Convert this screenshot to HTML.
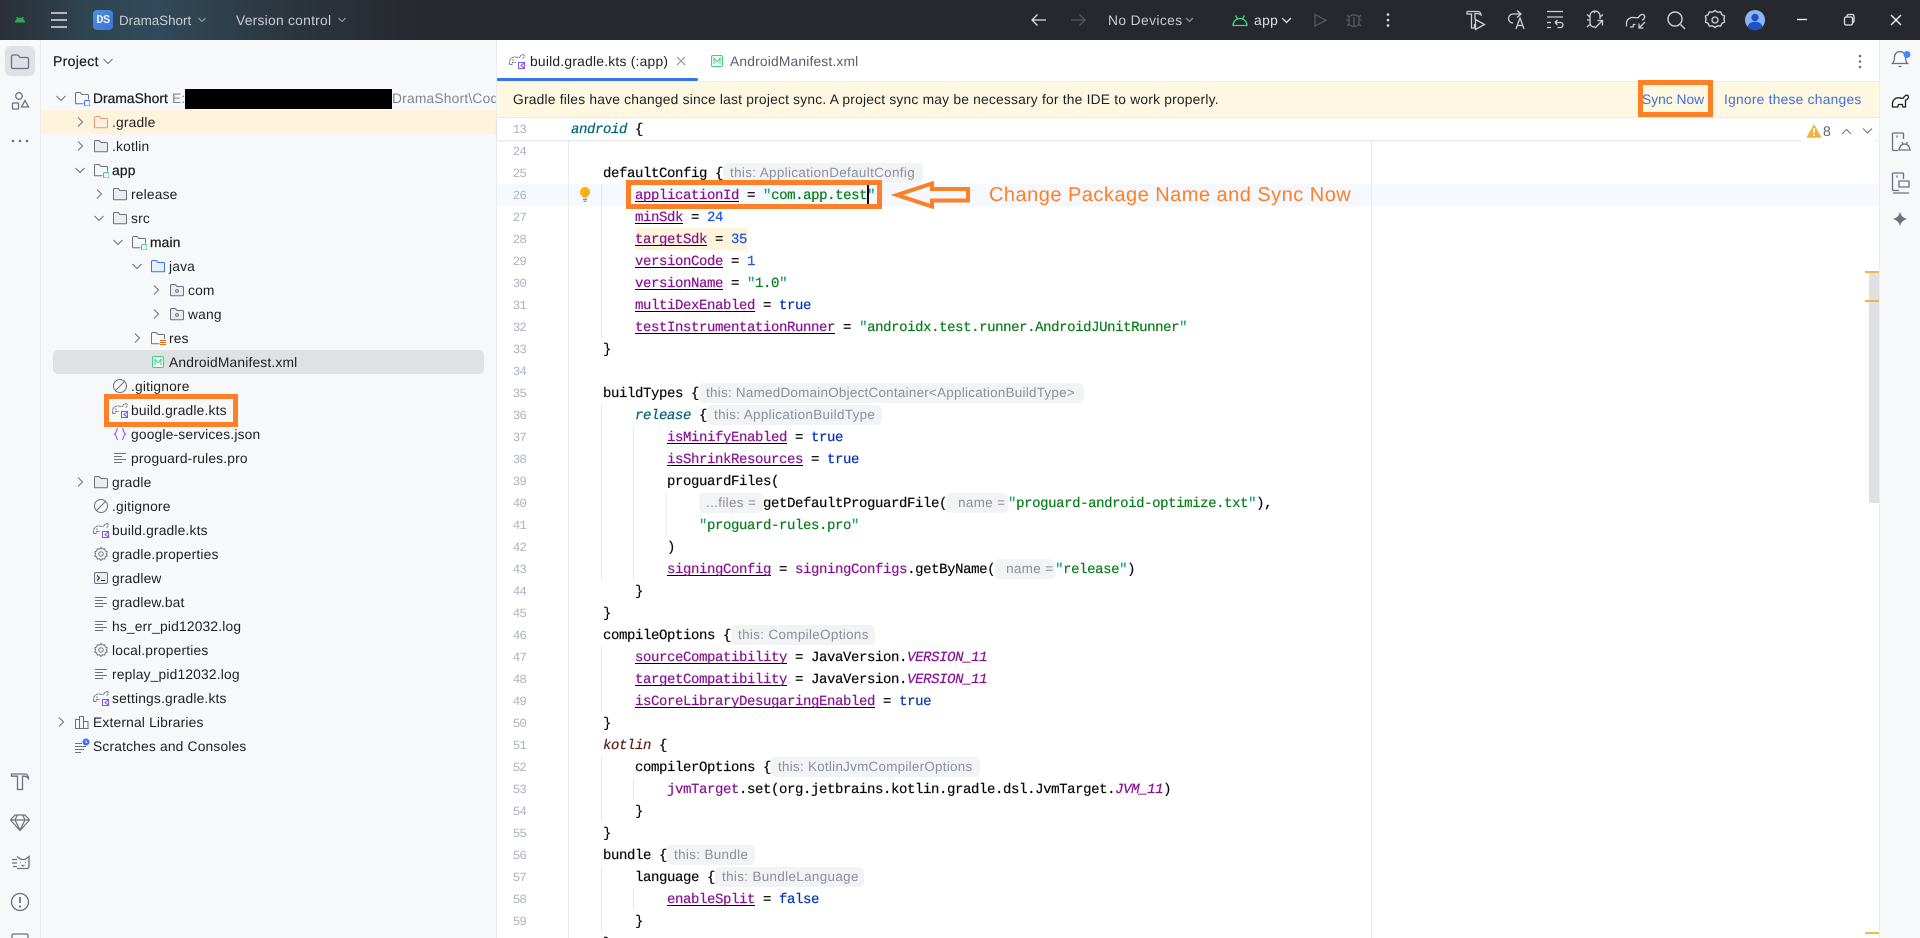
<!DOCTYPE html>
<html lang="en"><head><meta charset="utf-8"><title>DramaShort</title>
<style>
*{box-sizing:border-box}
html,body{margin:0;padding:0;width:1920px;height:938px;overflow:hidden;background:#fff}
body{position:relative;font-family:"Liberation Sans",sans-serif;font-size:13.8px;color:#1e1f22;text-rendering:geometricPrecision}
.a{position:absolute}
#top{left:0;top:0;width:1920px;height:40px;background:linear-gradient(90deg,#2a2f36 0,#2e4552 90px,#31495a 160px,#2b343b 300px,#26282e 430px,#26282e 100%);color:#c9ccd4;letter-spacing:.32px}
#left{left:0;top:40px;width:41px;height:898px;background:#f7f8fa;border-right:1px solid #ebecf0}
#panel{left:41px;top:40px;width:456px;height:898px;background:#f7f8fa;border-right:1px solid #ebecf0;overflow:hidden}
#right{left:1879px;top:40px;width:41px;height:898px;background:#f7f8fa;border-left:1px solid #ebecf0}
.tree{position:absolute;left:0;top:46px;width:455px}
.r{position:relative;height:24px;line-height:26px;white-space:pre;padding-left:calc(52px + 19px*var(--k));letter-spacing:.18px}
.r svg{position:absolute;width:16px;height:16px;top:4px}
.r .ch{left:calc(12px + 19px*var(--k));fill:none;stroke:#6c707e;stroke-width:1}
.r .ic{left:calc(33px + 19px*var(--k))}
.k0{--k:0}.k1{--k:1}.k2{--k:2}.k3{--k:3}.k4{--k:4}.k5{--k:5}
.fg{fill:#ebecf0;stroke:#6c707e}.fo{fill:#ffeee2;stroke:#e89a68}.fb{fill:#e7effd;stroke:#3574f0}
#tabs{left:497px;top:40px;width:1382px;height:42px;background:#fff;border-bottom:1px solid #ebecf0}
#banner{left:497px;top:82px;width:1382px;height:36px;background:#fef7e1;border-bottom:1px solid #ebecf0;line-height:35px;white-space:pre;letter-spacing:.21px}
.lnk{position:absolute;top:0;color:#3f6fd8}
.code{position:absolute;left:571px;top:140px;font-family:"Liberation Mono",monospace;font-size:14px;letter-spacing:-.4px;color:#080808;-webkit-text-stroke:.2px}
.l{height:22px;line-height:24px;white-space:pre;overflow:hidden}
.l1{padding-left:32px}.l2{padding-left:64px}.l3{padding-left:96px}.l4{padding-left:128px}
.p{color:#871094}.u{text-decoration:underline #000 1px;text-underline-offset:1.500px;text-decoration-skip-ink:none}
.s{color:#067d17}.q{color:#0f9f8c}.n{color:#1750eb}.k{color:#0033b3}.i{font-style:italic}.ft{color:#00627a}
.h{display:inline-block;vertical-align:top;height:20px;line-height:20px;margin-top:1px;padding-left:7px;background:#f2f3f5;border-radius:5px;color:#8c8f98;font-family:"Liberation Sans",sans-serif;font-size:13.4px;letter-spacing:.36px;overflow:hidden;-webkit-text-stroke:0}
.nums{position:absolute;left:497px;top:140px;width:29px;text-align:right;font-family:"Liberation Mono",monospace;font-size:12.5px;letter-spacing:-.9px;color:#aeb3c2}
.nums div{height:22px;line-height:24px}
.box{position:absolute;border:5px solid #ff7f27}
</style></head><body>
<svg width="0" height="0" style="position:absolute"><defs>
<symbol id="cr" viewBox="0 0 16 16"><path d="M6 3.500l4.500 4.500L6 12.500"/></symbol>
<symbol id="cd" viewBox="0 0 16 16"><path d="M3.500 6l4.500 4.500L12.500 6"/></symbol>
<symbol id="f" viewBox="0 0 16 16"><path d="M1.500 3.500a1 1 0 0 1 1-1h3.700l1.800 2h5.500a1 1 0 0 1 1 1v7.500a.8.8 0 0 1-.8.800H2.300a.8.800 0 0 1-.8-.8z"/></symbol>
<symbol id="pk" viewBox="0 0 16 16"><path d="M1.500 3.500a1 1 0 0 1 1-1h3.700l1.800 2h5.500a1 1 0 0 1 1 1v7.500a.8.8 0 0 1-.8.800H2.300a.8.800 0 0 1-.8-.8z" fill="#ebecf0" stroke="#6c707e"/><circle cx="8" cy="9" r="1.400" fill="none" stroke="#6c707e"/></symbol>
<symbol id="mod" viewBox="0 0 16 16"><path d="M1.500 3.500a1 1 0 0 1 1-1h3.700l1.800 2h5.500a1 1 0 0 1 1 1v7.500a.8.8 0 0 1-.8.800H2.300a.8.800 0 0 1-.8-.8z" fill="#f7f8fa" stroke="#6c707e"/><rect x="9.500" y="9.500" width="7" height="7" fill="#f7f8fa"/><rect x="10.500" y="10.500" width="5.500" height="5.500" rx="1.200" fill="#f7f8fa" stroke="currentColor"/></symbol>
<symbol id="res" viewBox="0 0 16 16"><path d="M1.500 3.500a1 1 0 0 1 1-1h3.700l1.800 2h5.500a1 1 0 0 1 1 1v7.500a.8.8 0 0 1-.8.800H2.300a.8.800 0 0 1-.8-.8z" fill="#f7f8fa" stroke="#6c707e"/><rect x="9.500" y="9" width="7" height="7" fill="#f7f8fa"/><path d="M10 10.500h6M10 12.500h6M10 14.500h6" stroke="#e66d17"/></symbol>
<symbol id="mf" viewBox="0 0 16 16"><rect x="2.500" y="2.500" width="11" height="11" rx="1.500" fill="#f2fcf3" stroke="#3bd07f"/><path d="M5 11V5.200l3 3.800 3-3.800V11" fill="none" stroke="#3bd07f"/></symbol>
<symbol id="ign" viewBox="0 0 16 16"><circle cx="8" cy="8" r="6.500" fill="none" stroke="#6c707e"/><path d="M3.500 12.500l9-9" stroke="#6c707e"/></symbol>
<symbol id="kts" viewBox="0 0 16 16"><path d="M.5 11.500V9C.5 6 3 3.800 6 4c2 .1 3.300.8 4.800.3M10.800 4.300c.5-2 2.500-3.300 3.800-2.500 1.200.9.600 3.200-1 3.700M.5 11.500H3l.5-2H7M3.500 6.500l1 1.500" fill="none" stroke="#7c808e" stroke-width="1.100" stroke-dasharray="3 .6"/><rect x="9.500" y="9.500" width="6" height="6" fill="#f7f8fa" stroke="#7f52ff"/><path d="M15 10.200l-3 2.300 3 2.300" fill="none" stroke="#7f52ff"/></symbol>
<symbol id="js" viewBox="0 0 16 16"><path d="M6 2.500C4 2.500 5 7 2.500 8 5 9 4 13.500 6 13.500M10 2.500c2 0 1 4.500 3.500 5.500C11 9 12 13.500 10 13.500" fill="none" stroke="#7f52ff"/></symbol>
<symbol id="txt" viewBox="0 0 16 16"><path d="M2 3.500h12M2 6.500h8M2 9.500h12M2 12.500h8" fill="none" stroke="#6c707e"/></symbol>
<symbol id="gear" viewBox="0 0 16 16"><path d="M8 1.500l1.500 1.600 2.200-.3.600 2.100 2 1-.9 2 .9 2.100-2 .9-.6 2.200-2.200-.3L8 14.500l-1.500-1.700-2.200.3-.6-2.200-2-.9.900-2.100-.9-2 2-1 .6-2.100 2.200.3z" fill="none" stroke="#6c707e"/><circle cx="8" cy="8" r="2.200" fill="none" stroke="#6c707e"/></symbol>
<symbol id="term" viewBox="0 0 16 16"><rect x="1.500" y="2.500" width="13" height="11" rx="1.500" fill="#ebecf0" stroke="#6c707e"/><path d="M4 5.500L6.500 8 4 10.500M8 10.500h4" fill="none" stroke="#1e1f22"/></symbol>
<symbol id="lib" viewBox="0 0 16 16"><path d="M1.500 14.500v-9h4v9zM5.500 14.500V2.500h4v12zM9.500 14.500v-7h4.500v7z" fill="none" stroke="#6c707e"/></symbol>
<symbol id="scr" viewBox="0 0 16 16"><path d="M1 5.500h7M1 8.500h11M1 11.500h9M1 14.500h6" fill="none" stroke="#6c707e"/><circle cx="12" cy="4" r="3.500" fill="#3574f0"/><path d="M12 2.300V4.300h1.300" fill="none" stroke="#fff" stroke-width=".8"/></symbol>
<symbol id="ele" viewBox="0 0 20 20"><path d="M2.500 16v-3.500C2.500 9 5.500 6.500 9 6.800c1.800.1 3 .9 4.500.2 .8-2 3-3.500 4.300-2.500 1.200 1 .4 3.600-1.300 4.300l-1 .4v6.800h-2.600l-.6-2.500H8.500l-.7 2.500z" fill="none" stroke="currentColor" stroke-width="1.300"/></symbol>
</defs></svg>

<div id="top" class="a">
 <span class="a" style="left:119px;top:0;line-height:41px;font-size:13.4px;letter-spacing:0">DramaShort</span>
 <span class="a" style="left:236px;top:0;line-height:41px;letter-spacing:.27px">Version control</span>
 <span class="a" style="left:1108px;top:0;line-height:41px;letter-spacing:.4px">No Devices</span>
 <span class="a" style="left:1254px;top:0;line-height:41px;letter-spacing:.4px;color:#dfe1e5">app</span>
 <div class="a" style="left:93px;top:10px;width:20px;height:20px;border-radius:4px;background:linear-gradient(135deg,#4b90d8,#3c72d8);color:#e6eefc;font:bold 12px/20px 'Liberation Mono',monospace;letter-spacing:-.4px;text-align:center">DS</div>
 <svg class="a" style="left:0;top:0" width="1920" height="40" fill="none" stroke="#ced0d6" stroke-width="1.300">
  <path d="M15 22.500c.2-3 2.300-5 5-5s4.800 2 5 5z" fill="#2da55d" stroke="none"/><path d="M16.500 17l1.300 1.500M23.500 17l-1.300 1.500" stroke="#2da55d"/>
  <path d="M51 13h16M51 20h16M51 27h16" stroke="#dfe1e5" stroke-width="1.600"/>
  <path d="M198.500 18l3.500 3.500 3.500-3.500M338.500 18l3.500 3.500 3.500-3.500M1186 18l3.500 3.500 3.500-3.500" stroke="#8a8d96"/>
  <path d="M1046 20h-14M1037.500 14.500L1032 20l5.500 5.500" stroke="#dfe1e5"/>
  <path d="M1071 20h14M1079.500 14.500L1085 20l-5.500 5.500" stroke="#55585f"/>
  <path d="M1233 25.500c.2-4 3-7 7-7s6.800 3 7 7zM1235.500 15.500l2 3.300M1244.500 15.500l-2 3.300" stroke="#3ddc84"/>
  <path d="M1282 18l4.500 4.500L1291 18" stroke="#dfe1e5"/>
  <path d="M1315 14.500v11.500l11-5.800z" stroke="#55585f"/>
  <path d="M1349 17.500c.5-1.500 2.500-2.500 5-2.500s4.500 1 5 2.500v5.500a5 3.500 0 0 1-10 0zM1346 20h3M1359 20h3M1347 15l2.500 2.500M1361 15l-2.500 2.500M1347 26l2.500-2.500M1361 26l-2.500-2.500M1354 17v9" stroke="#55585f"/>
  <circle cx="1388" cy="14.500" r="1.300" fill="#dfe1e5" stroke="none"/><circle cx="1388" cy="20" r="1.300" fill="#dfe1e5" stroke="none"/><circle cx="1388" cy="25.500" r="1.300" fill="#dfe1e5" stroke="none"/>
  <path d="M1467 11.500h11c1.500 0 3 1.200 3 3.500-1.200-1-2.500-1.500-4-1.500h-2v6M1467 11.500v2.500h4.500v14h3v-4M1475.500 19.500l9 5-9 5z"/>
  <path d="M1521 14h-8a4.500 4.500 0 0 0 0 9M1517 10.500l4 3.500-4 3.500M1516 29l4-11 4 11M1517.500 25.500h5"/>
  <path d="M1547 11.500h16M1547 17h16M1547 22.500h4M1547 27.500h4M1555 22.500h5.500a2.500 2.500 0 0 1 0 5h-3M1555 22.500l2.500-2.500M1555 22.500l2.500 2.500"/>
  <path d="M1590 16a5 5 0 0 1 10 0v3M1590 16v7a4 4 0 0 0 5 3.800M1587 14.500l3 2.500M1603 14.500l-3 2.500M1587 20h3M1587 27l3-2.500M1595 13l-1.500-2M1595 28l7-7M1597.500 20.500h5v5"/>
  <path d="M1626.500 26.500v-3c0-4 3.500-6.500 7.500-6 1.500.2 3 .6 4.500 0 1-2.500 4-4 5.500-2.500s.3 4.500-2 5M1630 27h3l.5-2.500h2M1645 22l-6 6M1639 23.500v4.500h4.500"/>
  <circle cx="1675" cy="19" r="7" stroke-width="1.400"/><path d="M1680.500 24.500l4.500 4.500" stroke-width="1.400"/>
  <path d="M1715 10.500l2.600 1.700 3-.3 1.300 2.700 2.600 1.400-.5 3 .5 3-2.600 1.400-1.300 2.700-3-.3-2.600 1.700-2.600-1.700-3 .3-1.300-2.700-2.600-1.400.5-3-.5-3 2.600-1.400 1.300-2.700 3 .3z" stroke-width="1.400"/><circle cx="1715" cy="20" r="3"/>
  <circle cx="1755" cy="20" r="10" fill="#8eb4f8" stroke="none"/><circle cx="1755" cy="17.500" r="3.700" fill="#1d53c4" stroke="none"/><path d="M1747.500 27c1-4 4-5.200 7.500-5.200s6.500 1.200 7.500 5.200a10 10 0 0 1-15 0z" fill="#1d53c4" stroke="none"/>
  <path d="M1797 19.500h10" stroke="#fff"/>
  <rect x="1844.500" y="17" width="8" height="8" rx="1.500" stroke="#dfe1e5"/><path d="M1847 17v-1a1.500 1.500 0 0 1 1.500-1.500h4a1.500 1.500 0 0 1 1.500 1.500v5a1.500 1.500 0 0 1-1.500 1.500" stroke="#dfe1e5"/>
  <path d="M1891 15l10 10M1901 15l-10 10" stroke="#fff"/>
 </svg>
</div>

<div id="left" class="a">
 <div class="a" style="left:5px;top:6px;width:30px;height:30px;border-radius:6px;background:#dfe1e5"></div>
 <svg class="a" style="left:0;top:0" width="40" height="898" fill="none" stroke="#6c707e" stroke-width="1.300">
  <path d="M11.500 16.500a1.500 1.500 0 0 1 1.500-1.500h4.800l2.200 2.500h7a1.500 1.500 0 0 1 1.500 1.500v8a1.500 1.500 0 0 1-1.500 1.500H13a1.500 1.500 0 0 1-1.500-1.500z"/>
  <circle cx="19" cy="56" r="3.300"/><rect x="12.500" y="63" width="6" height="6" rx=".8"/><path d="M25 60.500l3.500 6.500h-7z"/>
  <circle cx="13" cy="101" r="1.300" fill="#6c707e" stroke="none"/><circle cx="20" cy="101" r="1.300" fill="#6c707e" stroke="none"/><circle cx="27" cy="101" r="1.300" fill="#6c707e" stroke="none"/>
  <path d="M11.500 734h13c2.500 0 4 1.800 4 4.500-1-1.500-3-2.300-5-2.300h-1v13.300h-5v-13.300h-6z"/>
  <path d="M15 775h10l4.500 5-9.500 10.500L10.500 780zM10.500 780h19M17 775.500l-2 4.500 5 10 5-10-2-4.500" stroke-width="1.200"/>
  <path d="M17 816.500l4 3h4l4-3v10a2 2 0 0 1-2 2H17M12 819.500h5M12 823h5M13 826.500h4"/>
  <path d="M20 822.500h.8M25 822.500h.8M21.500 825l1.500 1 1.500-1" stroke-width="1.200"/>
  <circle cx="20" cy="862" r="8.500"/><path d="M20 857v6" stroke-width="1.800"/><circle cx="20" cy="866.500" r="1.100" fill="#6c707e" stroke="none"/>
  <path d="M12 898v-2.500a1.500 1.500 0 0 1 1.500-1.500h13a1.500 1.500 0 0 1 1.500 1.500v2.500"/>
 </svg>
</div>

<div id="panel" class="a">
 <div class="a" style="left:12px;top:8px;font-weight:400;letter-spacing:.32px;line-height:26px;font-size:14px;-webkit-text-stroke:.25px #1e1f22">Project</div>
 <svg class="a" style="left:59px;top:13px;fill:none;stroke:#6c707e" width="16" height="16"><use href="#cd"/></svg>
 <div class="a" style="left:0;top:70px;width:455px;height:24px;background:#fef3dc"></div>
 <div class="a" style="left:12px;top:310px;width:431px;height:24px;border-radius:5px;background:#dfe1e5"></div>
 <div class="tree">
  <div class="r k0" style="letter-spacing:.05px;-webkit-text-stroke:.25px #1e1f22"><svg class="ch"><use href="#cd"/></svg><svg class="ic" style="color:#3574f0"><use href="#mod"/></svg>DramaShort</div>
  <div class="r k1"><svg class="ch"><use href="#cr"/></svg><svg class="ic fo"><use href="#f"/></svg>.gradle</div>
  <div class="r k1"><svg class="ch"><use href="#cr"/></svg><svg class="ic fg"><use href="#f"/></svg>.kotlin</div>
  <div class="r k1" style="-webkit-text-stroke:.25px #1e1f22"><svg class="ch"><use href="#cd"/></svg><svg class="ic" style="color:#3bd07f"><use href="#mod"/></svg>app</div>
  <div class="r k2"><svg class="ch"><use href="#cr"/></svg><svg class="ic fg"><use href="#f"/></svg>release</div>
  <div class="r k2"><svg class="ch"><use href="#cd"/></svg><svg class="ic fg"><use href="#f"/></svg>src</div>
  <div class="r k3" style="-webkit-text-stroke:.25px #1e1f22"><svg class="ch"><use href="#cd"/></svg><svg class="ic" style="color:#3bd07f"><use href="#mod"/></svg>main</div>
  <div class="r k4"><svg class="ch"><use href="#cd"/></svg><svg class="ic fb"><use href="#f"/></svg>java</div>
  <div class="r k5"><svg class="ch"><use href="#cr"/></svg><svg class="ic"><use href="#pk"/></svg>com</div>
  <div class="r k5"><svg class="ch"><use href="#cr"/></svg><svg class="ic"><use href="#pk"/></svg>wang</div>
  <div class="r k4"><svg class="ch"><use href="#cr"/></svg><svg class="ic"><use href="#res"/></svg>res</div>
  <div class="r k4"><svg class="ic"><use href="#mf"/></svg>AndroidManifest.xml</div>
  <div class="r k2"><svg class="ic"><use href="#ign"/></svg>.gitignore</div>
  <div class="r k2"><svg class="ic"><use href="#kts"/></svg>build.gradle.kts</div>
  <div class="r k2"><svg class="ic"><use href="#js"/></svg>google-services.json</div>
  <div class="r k2"><svg class="ic"><use href="#txt"/></svg>proguard-rules.pro</div>
  <div class="r k1"><svg class="ch"><use href="#cr"/></svg><svg class="ic fg"><use href="#f"/></svg>gradle</div>
  <div class="r k1"><svg class="ic"><use href="#ign"/></svg>.gitignore</div>
  <div class="r k1"><svg class="ic"><use href="#kts"/></svg>build.gradle.kts</div>
  <div class="r k1"><svg class="ic"><use href="#gear"/></svg>gradle.properties</div>
  <div class="r k1"><svg class="ic"><use href="#term"/></svg>gradlew</div>
  <div class="r k1"><svg class="ic"><use href="#txt"/></svg>gradlew.bat</div>
  <div class="r k1"><svg class="ic"><use href="#txt"/></svg>hs_err_pid12032.log</div>
  <div class="r k1"><svg class="ic"><use href="#gear"/></svg>local.properties</div>
  <div class="r k1"><svg class="ic"><use href="#txt"/></svg>replay_pid12032.log</div>
  <div class="r k1"><svg class="ic"><use href="#kts"/></svg>settings.gradle.kts</div>
  <div class="r k0"><svg class="ch"><use href="#cr"/></svg><svg class="ic"><use href="#lib"/></svg>External Libraries</div>
  <div class="r k0"><svg class="ic"><use href="#scr"/></svg>Scratches and Consoles</div>
 </div>
 <span class="a" style="left:131px;top:46px;line-height:26px;color:#818594;letter-spacing:.2px">E:</span>
 <span class="a" style="left:351px;top:46px;line-height:26px;color:#818594;letter-spacing:.2px;white-space:pre">DramaShort\Code</span>
 <div class="a" style="left:144px;top:49px;width:207px;height:20px;background:#000"></div>
</div>

<div id="tabs" class="a">
 <svg class="a" style="left:12px;top:13px" width="16" height="16"><use href="#kts"/></svg>
 <span class="a" style="left:33px;top:0;line-height:43px;letter-spacing:.24px">build.gradle.kts (:app)</span>
 <svg class="a" style="left:178px;top:15px;stroke:#8c8f98;fill:none" width="12" height="12"><path d="M2 2l8 8M10 2l-8 8"/></svg>
 <div class="a" style="left:0;top:38px;width:201px;height:3px;background:#3574f0;border-radius:0 2px 2px 0"></div>
 <svg class="a" style="left:212px;top:13px" width="16" height="16"><use href="#mf"/></svg>
 <span class="a" style="left:233px;top:0;line-height:43px;letter-spacing:.18px;color:#5a5d6b">AndroidManifest.xml</span>
 <svg class="a" style="left:1357px;top:13px;fill:#6c707e" width="12" height="16"><circle cx="6" cy="3" r="1.300"/><circle cx="6" cy="8.500" r="1.300"/><circle cx="6" cy="14" r="1.300"/></svg>
</div>

<div id="banner" class="a"><span class="a" style="left:16px;top:0">Gradle files have changed since last project sync. A project sync may be necessary for the IDE to work properly.</span><span class="lnk" style="left:1145px;letter-spacing:0">Sync Now</span><span class="lnk" style="left:1227px;letter-spacing:.24px">Ignore these changes</span></div>

<div class="a" style="left:497px;top:184px;width:1382px;height:22px;background:#f5f8fe"></div>
<div class="a" style="left:635px;top:228px;width:112px;height:22px;background:#fdf4d9"></div>
<div class="a" style="left:568px;top:140px;width:1px;height:798px;background:#ebecf0"></div>
<div class="a" style="left:1371px;top:118px;width:1px;height:820px;background:#ebecf0"></div>
<svg class="a" style="left:0;top:0" width="1920" height="938" stroke="#e6e7eb" fill="none">
 <path d="M601.500 184V338M601.500 404V580M633.500 426V580M666 492V536M601.500 646V712M601.500 756V822M633.500 778V800M601.500 866V932M633.500 888V910"/>
</svg>

<div class="nums"><div>24</div><div>25</div><div>26</div><div>27</div><div>28</div><div>29</div><div>30</div><div>31</div><div>32</div><div>33</div><div>34</div><div>35</div><div>36</div><div>37</div><div>38</div><div>39</div><div>40</div><div>41</div><div>42</div><div>43</div><div>44</div><div>45</div><div>46</div><div>47</div><div>48</div><div>49</div><div>50</div><div>51</div><div>52</div><div>53</div><div>54</div><div>55</div><div>56</div><div>57</div><div>58</div><div>59</div></div>

<div class="code" style="height:798px;overflow:hidden">
<div class="l"> </div>
<div class="l l1">defaultConfig {<span class="h" style="width:200px">this: ApplicationDefaultConfig</span></div>
<div class="l l2"><span class="p u">applicationId</span> = <span class="s"><span class="q">"</span>com.app.test<span class="q">"</span></span></div>
<div class="l l2"><span class="p u">minSdk</span> = <span class="n">24</span></div>
<div class="l l2"><span class="p u">targetSdk</span> = <span class="n">35</span></div>
<div class="l l2"><span class="p u">versionCode</span> = <span class="n">1</span></div>
<div class="l l2"><span class="p u">versionName</span> = <span class="s"><span class="q">"</span>1.0<span class="q">"</span></span></div>
<div class="l l2"><span class="p u">multiDexEnabled</span> = <span class="k">true</span></div>
<div class="l l2"><span class="p u">testInstrumentationRunner</span> = <span class="s"><span class="q">"</span>androidx.test.runner.AndroidJUnitRunner<span class="q">"</span></span></div>
<div class="l l1">}</div>
<div class="l"> </div>
<div class="l l1">buildTypes {<span class="h" style="width:385px;letter-spacing:.27px">this: NamedDomainObjectContainer&lt;ApplicationBuildType&gt;</span></div>
<div class="l l2"><span class="ft i">release</span> {<span class="h" style="width:175px">this: ApplicationBuildType</span></div>
<div class="l l3"><span class="p u">isMinifyEnabled</span> = <span class="k">true</span></div>
<div class="l l3"><span class="p u">isShrinkResources</span> = <span class="k">true</span></div>
<div class="l l3">proguardFiles(</div>
<div class="l l4"><span class="h" style="width:64px">...files =</span>getDefaultProguardFile(<span class="h" style="width:61px"> name =</span><span class="s"><span class="q">"</span>proguard-android-optimize.txt<span class="q">"</span></span>),</div>
<div class="l l4"><span class="s"><span class="q">"</span>proguard-rules.pro<span class="q">"</span></span></div>
<div class="l l3">)</div>
<div class="l l3"><span class="p u">signingConfig</span> = <span class="p">signingConfigs</span>.getByName(<span class="h" style="width:60px"> name =</span><span class="s"><span class="q">"</span>release<span class="q">"</span></span>)</div>
<div class="l l2">}</div>
<div class="l l1">}</div>
<div class="l l1">compileOptions {<span class="h" style="width:144px">this: CompileOptions</span></div>
<div class="l l2"><span class="p u">sourceCompatibility</span> = JavaVersion.<span class="p i">VERSION_11</span></div>
<div class="l l2"><span class="p u">targetCompatibility</span> = JavaVersion.<span class="p i">VERSION_11</span></div>
<div class="l l2"><span class="p u">isCoreLibraryDesugaringEnabled</span> = <span class="k">true</span></div>
<div class="l l1">}</div>
<div class="l l1"><span class="i" style="color:#5c1a12">kotlin</span> {</div>
<div class="l l2">compilerOptions {<span class="h" style="width:209px;letter-spacing:.28px">this: KotlinJvmCompilerOptions</span></div>
<div class="l l3"><span class="p">jvmTarget</span>.set(org.jetbrains.kotlin.gradle.dsl.JvmTarget.<span class="p i">JVM_11</span>)</div>
<div class="l l2">}</div>
<div class="l l1">}</div>
<div class="l l1">bundle {<span class="h" style="width:88px">this: Bundle</span></div>
<div class="l l2">language {<span class="h" style="width:149px">this: BundleLanguage</span></div>
<div class="l l3"><span class="p u">enableSplit</span> = <span class="k">false</span></div>
<div class="l l2">}</div>
<div class="l l1">}</div>
</div>

<svg class="a" style="left:578px;top:186px" width="14" height="18" fill="#ffaf0f"><path d="M7 1a5 5 0 0 0-3 9c.5.4.7 1 .7 1.600h4.600c0-.6.2-1.200.7-1.600a5 5 0 0 0-3-9z"/><path d="M5 13.300h4M5.500 15.300h3" stroke="#6c707e" fill="none"/></svg>
<div class="a" style="left:867px;top:185px;width:2px;height:19px;background:#000"></div>

<div class="a" style="left:497px;top:118px;width:1382px;height:22px;background:#fff;box-shadow:0 1px 2px rgba(0,0,0,.12)"></div>
<div class="a" style="left:497px;top:118px;width:29px;height:22px;line-height:24px;text-align:right;font-family:'Liberation Mono',monospace;font-size:12.5px;letter-spacing:-.9px;color:#aeb3c2">13</div>
<div class="a" style="left:571px;top:118px;line-height:24px;font-family:'Liberation Mono',monospace;font-size:14px;letter-spacing:-.4px;white-space:pre;color:#080808;-webkit-text-stroke:.2px"><span class="ft i">android</span> {</div>
<div class="a" style="left:1800px;top:119px;width:77px;height:23px;background:#fff;border-radius:0 0 4px 4px"></div>
<svg class="a" style="left:1806px;top:122px" width="16" height="18"><path d="M8 2l7 12.500a.8.8 0 0 1-.7 1.200H1.700a.8.8 0 0 1-.7-1.200z" fill="#f2b33d"/><path d="M8 6v5" stroke="#fff" stroke-width="1.600"/><circle cx="8" cy="13.300" r="1" fill="#fff"/></svg>
<span class="a" style="left:1823px;top:120px;line-height:22px;color:#5a5d6b;font-size:14px">8</span>
<svg class="a" style="left:1840px;top:124px;fill:none;stroke:#6c707e" width="34" height="14"><path d="M2 10l4.500-4.500L11 10M23 4.500l4.500 4.500L32 4.500"/></svg>

<div id="right" class="a"><svg class="a" style="left:0;top:0" width="40" height="240" fill="none" stroke="#6c707e" stroke-width="1.300">
 <path d="M12.500 23.500h15c-1.500-1.500-2-3-2-6.500a5.500 5.500 0 0 0-11 0c0 3.500-.5 5-2 6.500zM18.500 26.500h3" />
 <circle cx="27" cy="14.500" r="3.500" fill="#4a86f5" stroke="none"/>
 <use href="#ele" x="10" y="51" width="20" height="20"/>
 <path d="M18 110.500h-4.500a1 1 0 0 1-1-1V94a1 1 0 0 1 1-1h9a1 1 0 0 1 1 1v5M17 95.500v2M19 110c.5-4 3-6 5.500-6s5 2 5.500 6zM22 102l1 2M27.500 102l-1 2"/>
 <path d="M19 150.500h-5.500a1 1 0 0 1-1-1V134a1 1 0 0 1 1-1h9a1 1 0 0 1 1 1v5M17 135.500v2M19 141h10v6H19zM13 153h16"/>
 <path d="M20 171.500c.7 4 2.500 6 7 7.500-4.500 1.500-6.300 3.500-7 7.500-.7-4-2.500-6-7-7.500 4.500-1.500 6.300-3.500 7-7.500z" fill="#6c707e" stroke="none"/>
</svg></div>

<div class="a" style="left:1869px;top:272px;width:10px;height:231px;background:#e0e0e0"></div>
<div class="a" style="left:1865px;top:271px;width:14px;height:2px;background:#ebb94f"></div>
<div class="a" style="left:1865px;top:300px;width:14px;height:2px;background:#e5b555"></div>
<div class="a" style="left:1865px;top:932px;width:14px;height:2px;background:#ebb94f"></div>

<div class="box" style="left:1638px;top:80px;width:75px;height:37px"></div>
<div class="box" style="left:104px;top:394px;width:134px;height:33px"></div>
<div class="box" style="left:626px;top:180px;width:256px;height:29px"></div>
<svg class="a" style="left:885px;top:175px" width="90" height="40" fill="none" stroke="#ff7f27" stroke-width="4"><path d="M83 14H47V8.500L12 20l35 11.500V25.500H83z"/></svg>
<div class="a" style="left:989px;top:182px;font-size:20px;line-height:26px;color:#ff7f27;letter-spacing:.48px;white-space:pre">Change Package Name and Sync Now</div>
</body></html>
